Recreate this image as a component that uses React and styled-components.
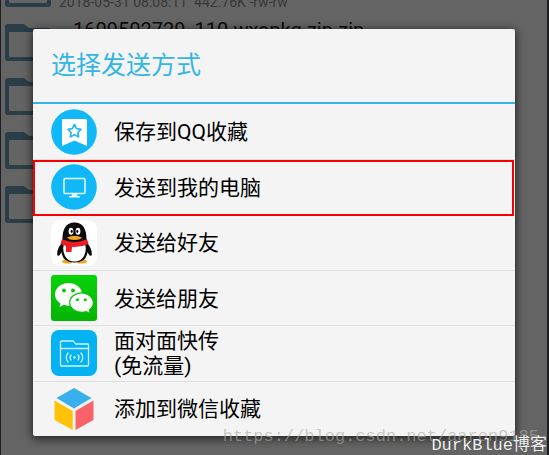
import styled, { createGlobalStyle } from 'styled-components';

const GlobalStyle = createGlobalStyle`
  *, *::before, *::after {
    box-sizing: border-box;
  }

  body {
    margin: 0;
    background: #646464;
    font-family: Roboto, "Noto Sans CJK SC", sans-serif;
  }
`;

const Screen = styled.div`
  position: relative;
  min-height: 100vh;
  overflow: hidden;
  background: #646464;
  border-left: 1px solid #1e1d22;
  border-right: 2px solid #1e1d22;
`;

const FileList = styled.ul`
  position: absolute;
  inset: -38px 0 0;
  margin: 0;
  padding: 0 4px;
  list-style: none;
`;

const FileItem = styled.li`
  display: flex;
  gap: 8px;
  height: 54px;
  padding-top: 8px;

  svg {
    flex: none;
  }
`;

const FileInfo = styled.div`
  display: flex;
  flex-direction: column;
  gap: 12px;
  white-space: nowrap;
`;

const FileName = styled.span`
  padding-left: 14px;
  font-size: 20px;
  line-height: 12px;
  color: #0c0c0c;
`;

const FileMeta = styled.span`
  font-size: 14px;
  line-height: 16px;
  color: #383838;
  white-space: pre;
`;

const Dialog = styled.section`
  position: relative;
  margin: 29px 32px 19px;
  background: #f4f4f4;
  border-radius: 2px;
  box-shadow: 0 2px 8px 1px rgba(0, 0, 0, 0.65);
`;

const DialogTitle = styled.h1`
  margin: 0;
  padding: 0 18px;
  font-size: 25px;
  font-weight: 400;
  line-height: 73px;
  color: #33b5e5;
  border-bottom: 2px solid #33b5e5;
`;

const OptionList = styled.ul`
  display: grid;
  grid-auto-rows: 1fr;
  min-height: 332px;
  margin: 0;
  padding: 0;
  list-style: none;
`;

const OptionItem = styled.li`
  position: relative;
  display: flex;

  & + & {
    border-top: 1px solid #dedede;
  }

  &::after {
    content: "";
    position: absolute;
    z-index: 1;
    inset: 0 1px -1px 0;
    border: ${(props) => (props.$marked ? '2px solid #f60000' : '0')};
    pointer-events: none;
  }
`;

const OptionButton = styled.button`
  flex: 1;
  display: flex;
  align-items: center;
  gap: 17px;
  padding: 0 18px;
  border: 0;
  background: none;
  font-family: inherit;
  font-size: 21px;
  line-height: 25px;
  color: #000;
  text-align: left;
  cursor: pointer;

  svg {
    flex: none;
  }
`;

const OptionLabel = styled.span`
  padding-top: 2px;
  white-space: pre-line;
`;

const Watermark = styled.span`
  position: absolute;
  right: 8px;
  bottom: 8px;
  font-family: "Liberation Mono", "Noto Sans CJK SC", monospace;
  font-size: 17px;
  line-height: 20px;
  color: rgba(172, 172, 160, 0.6);
  white-space: nowrap;
`;

const BlogName = styled(Watermark)`
  right: 0;
  bottom: 0;
  line-height: 18px;
  color: #f0f0f0;
  text-shadow: 0 0 1px #444;
`;

function FolderIcon() {
  return (
    <svg width="46" height="37" viewBox="0 0 46 37">
      <path
        fill="#2b3d47"
        fillRule="evenodd"
        d="M3 0H19L24 4H43Q46 4 46 7V34Q46 37 43 37H3Q0 37 0 34V3Q0 0 3 0ZM5 8Q4 8 4 9V32Q4 33 5 33H41Q42 33 42 32V9Q42 8 41 8Z"
      />
    </svg>
  );
}

function FavoriteIcon() {
  return (
    <svg width="46" height="46" viewBox="0 0 46 46">
      <circle cx="23" cy="23" r="22.8" fill="#10b8f7" />
      <path fill="#fff" d="M12 10H34.500Q36 10 36 11.500V37L23.500 31.500L11 37V11Q11 10 12 10Z" />
      <path
        fill="none"
        stroke="#28b9f3"
        strokeWidth="1.700"
        strokeLinejoin="round"
        d="M23.500 15.500L25.600 19.600L30 20.300L26.900 23.500L27.600 27.800L23.500 25.800L19.400 27.800L20.100 23.500L17 20.300L21.400 19.600Z"
      />
    </svg>
  );
}

function ComputerIcon() {
  return (
    <svg width="46" height="46" viewBox="0 0 46 46">
      <circle cx="23" cy="23" r="22.800" fill="#10b8f7" />
      <rect x="13" y="14.500" width="21" height="15" rx="1" fill="none" stroke="#e9f9ff" strokeWidth="1.500" />
      <path fill="#e9f9ff" d="M21 30H26V31.500L29 32.500V33.500H18V32.500L21 31.500Z" />
    </svg>
  );
}

function QQIcon() {
  return (
    <svg width="46" height="46" viewBox="0 0 46 46">
      <rect width="46" height="46" rx="9" fill="#fff" />
      <path fill="#f5a623" d="M11 42Q11 39 17 39L22 41.500L20 43.500Q13 44 11 42ZM36 42Q36 39 30 39L25 41.500L27 43.500Q34 44 36 42Z" />
      <path
        fill="#0a0a0a"
        d="M11.500 19C11.500 9 15 2.500 23.500 2.500S35.500 9 35.500 19L37 24C40 28 41.500 32 40.500 35.500Q39 37 36.500 32Q35.500 42.500 23.500 42.500T10.500 32Q8 37 6.500 35.500C5.500 32 7 28 10 24Z"
      />
      <path fill="#fff" d="M13 24Q23 28 34 24Q36 30 33 36Q30 41.500 23.500 41.500T14 36Q11 30 13 24Z" />
      <ellipse cx="20" cy="11.200" rx="2.400" ry="3.500" fill="#fff" />
      <ellipse cx="27" cy="11.200" rx="2.400" ry="3.500" fill="#fff" />
      <ellipse cx="20.700" cy="11.300" rx="1" ry="1.600" fill="#000" />
      <ellipse cx="26.300" cy="11.300" rx="1" ry="1.600" fill="#000" />
      <path fill="#f9a71a" d="M16 17.500Q23.500 14 31 17.500Q29 20 23.500 20T16 17.500Z" />
      <path fill="#ed1c24" d="M11 19Q23.500 25.500 36 19L37.500 24Q30 27.500 21 27L20.500 32H15V26L9.500 24Z" />
    </svg>
  );
}

function WeChatIcon() {
  return (
    <svg width="46" height="46" viewBox="0 0 46 46">
      <defs>
        <linearGradient id="wechat" x1="0" y1="0" x2="0" y2="1">
          <stop offset="0" stopColor="#08d408" />
          <stop offset="1" stopColor="#05b305" />
        </linearGradient>
      </defs>
      <rect width="46" height="46" rx="3" fill="url(#wechat)" />
      <path fill="#fff" d="M17.500 8C10 8 4 13 4 19.500C4 23.500 6.300 26.500 9.500 28.500L8.500 32L13 29.800Q16 31 20 30.500L31 18.500C30.500 12.500 24.500 8 17.500 8Z" />
      <path
        fill="#fff"
        stroke="#09bf08"
        strokeWidth="1.200"
        d="M30.500 17.800C37 17.800 42.300 22.200 42.300 27.800C42.300 31 40.800 33.300 38.300 35L39.300 38.800L35.300 36.600Q33.500 37.300 30.500 37.300C24 37.300 18.700 33 18.700 27.500C18.700 22.200 24 17.800 30.500 17.800Z"
      />
      <g fill="#08c308">
        <circle cx="13" cy="15.500" r="1.900" />
        <circle cx="22" cy="15.500" r="1.900" />
        <circle cx="26.500" cy="24.700" r="1.500" />
        <circle cx="34.300" cy="24.700" r="1.500" />
      </g>
    </svg>
  );
}

function TransferIcon() {
  return (
    <svg width="46" height="46" viewBox="0 0 46 46">
      <rect width="46" height="46" rx="8" fill="#02b2f3" />
      <g fill="none" stroke="#d5f3ff" strokeWidth="1.300" strokeLinecap="round" strokeLinejoin="round">
        <path d="M9.500 18.500V12Q9.500 11 10.500 11H22.500L24.500 14H36.500Q37.500 14 37.500 15V18.500ZM9.500 18.500V35Q9.500 36 10.500 36H36.500Q37.500 36 37.500 35V18.500" />
        <path d="M17 23Q13.500 27.500 17 32M20 25Q18 27.500 20 30M27 25Q29 27.500 27 30M30 23Q33.500 27.500 30 32" />
      </g>
      <circle cx="23.500" cy="27.500" r="1.200" fill="#e5f8ff" />
    </svg>
  );
}

function CubeIcon() {
  return (
    <svg width="46" height="46" viewBox="0 0 46 46">
      <path fill="#39b0ed" d="M23 2L40.500 12L23 22.500L5.500 12Z" />
      <path fill="#ffc206" d="M3.500 14.500L21.700 25V44L4.500 34.500Q3.500 34 3.500 33Z" />
      <path fill="#f96268" d="M42.500 14.500L24.500 25V44L41.500 34.500Q42.500 34 42.500 33Z" />
    </svg>
  );
}

const files = [
  { id: 1, meta: '2018-05-31 08:08:11  442.76K -rw-rw' },
  { id: 2, name: '1609502729_110.wxapkg.zip.zip' },
  { id: 3 },
  { id: 4 },
  { id: 5 },
];

const options = [
  { label: '保存到QQ收藏', icon: FavoriteIcon },
  { label: '发送到我的电脑', icon: ComputerIcon, marked: true },
  { label: '发送给好友', icon: QQIcon },
  { label: '发送给朋友', icon: WeChatIcon },
  { label: '面对面快传\n(免流量)', icon: TransferIcon },
  { label: '添加到微信收藏', icon: CubeIcon },
];

export default function App() {
  return (
    <>
      <GlobalStyle />
      <Screen>
        <FileList>
          {files.map((file) => (
            <FileItem key={file.id}>
              <FolderIcon />
              <FileInfo>
                <FileName>{file.name || '\u00a0'}</FileName>
                {file.meta && <FileMeta>{file.meta}</FileMeta>}
              </FileInfo>
            </FileItem>
          ))}
        </FileList>
        <Dialog role="dialog" aria-labelledby="dialog-title">
          <DialogTitle id="dialog-title">选择发送方式</DialogTitle>
          <OptionList>
            {options.map(({ label, icon: Icon, marked }) => (
              <OptionItem key={label} $marked={marked}>
                <OptionButton type="button">
                  <Icon />
                  <OptionLabel>{label}</OptionLabel>
                </OptionButton>
              </OptionItem>
            ))}
          </OptionList>
        </Dialog>
        <Watermark>https://blog.csdn.net/aaron9185</Watermark>
        <BlogName>DurkBlue博客</BlogName>
      </Screen>
    </>
  );
}
